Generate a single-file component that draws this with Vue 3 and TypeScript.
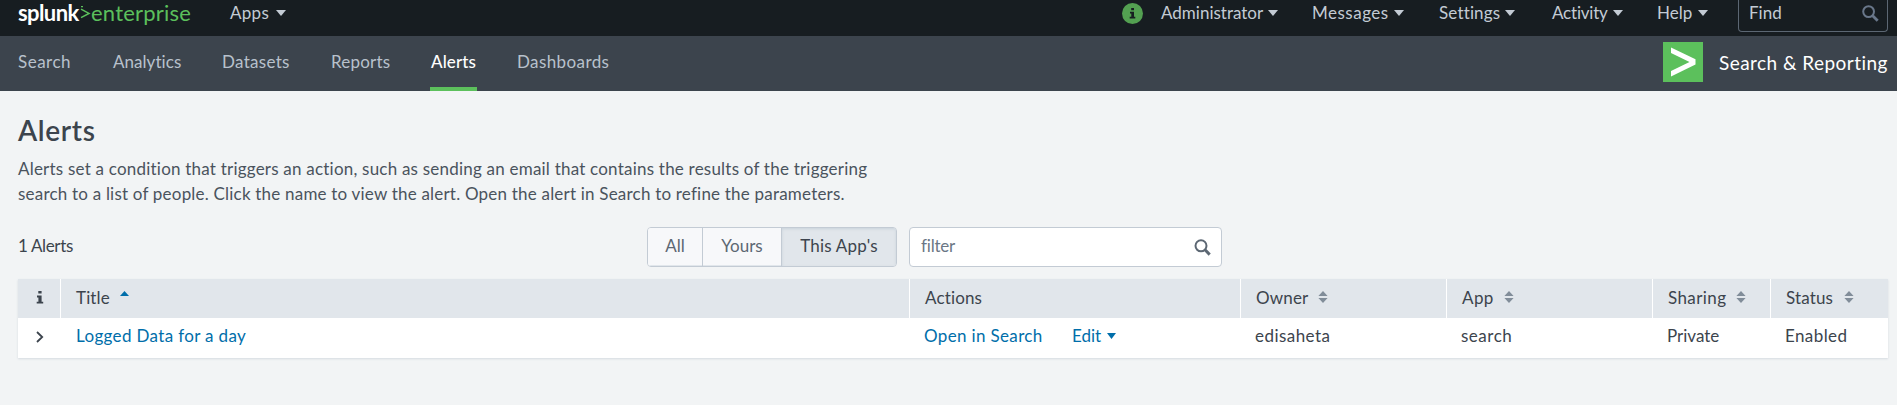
<script setup lang="ts">
interface MenuItem { label: string; cls: string }
interface Column { key: string; label: string; sortable: boolean }

const menus: MenuItem[] = [
  { label: 'Administrator', cls: 'm-admin' },
  { label: 'Messages', cls: 'm-messages' },
  { label: 'Settings', cls: 'm-settings' },
  { label: 'Activity', cls: 'm-activity' },
  { label: 'Help', cls: 'm-help' },
]
const tabs: string[] = ['Search', 'Analytics', 'Datasets', 'Reports', 'Alerts', 'Dashboards']
const activeTab = 'Alerts'
const scopes: string[] = ['All', 'Yours', "This App's"]
const activeScope = "This App's"
const columns: Column[] = [
  { key: 'owner', label: 'Owner', sortable: true },
  { key: 'app', label: 'App', sortable: true },
  { key: 'sharing', label: 'Sharing', sortable: true },
  { key: 'status', label: 'Status', sortable: true },
]
const alerts = [
  { title: 'Logged Data for a day', owner: 'edisaheta', app: 'search', sharing: 'Private', status: 'Enabled' },
] as Record<string, string>[]
</script>

<template>
  <div class="page">
    <header class="topbar">
      <div class="logo"><span class="brand">splunk</span><svg class="gt" width="11" height="13" viewBox="0 0 11 13"><path d="M1 3.2L9 7.4L1 11.6" /><path d="M1 0.6h2" /></svg><span class="edition">enterprise</span></div>
      <a class="menu m-apps"><span>Apps</span><svg class="caret" width="10" height="6" viewBox="0 0 10 6"><path d="M0 0H10L5 6Z" /></svg></a>
      <svg class="health" width="21" height="21" viewBox="0 0 21 21">
        <circle cx="10.5" cy="10.5" r="10.5" fill="#53a051" />
        <path fill="#171d21" d="M9.2 5h2.8v2.3H9.2zM8 8.7h4v5h1.3v1.8H7.7v-1.8h1.6v-3.2H8z" />
      </svg>
      <a v-for="m in menus" :key="m.label" class="menu" :class="m.cls">
        <span>{{ m.label }}</span><svg class="caret" width="10" height="6" viewBox="0 0 10 6"><path d="M0 0H10L5 6Z" /></svg>
      </a>
      <div class="find">
        <span>Find</span>
        <svg width="17" height="17" viewBox="0 0 17 17"><circle cx="6.6" cy="6.6" r="5.4" fill="none" stroke="#69778a" stroke-width="2" /><path d="M10.7 10.7L15.7 15.7" stroke="#69778a" stroke-width="2.8" /></svg>
      </div>
    </header>

    <nav class="appbar">
      <a v-for="t in tabs" :key="t" class="tab" :class="[`t-${t.toLowerCase()}`, { active: t === activeTab }]">{{ t }}</a>
      <div class="app">
        <svg width="40" height="40" viewBox="0 0 40 40"><rect width="40" height="40" fill="#5cc05c" /><path fill="#fff" d="M8 5.5L32.5 17.2V22.5L8 34.5V29L26.5 20L8 11Z" /></svg>
        <span>Search &amp; Reporting</span>
      </div>
    </nav>

    <main>
      <h1>Alerts</h1>
      <p class="intro"><span class="l1">Alerts set a condition that triggers an action, such as sending an email that contains the results of the triggering</span><br><span class="l2">search to a list of people. Click the name to view the alert. Open the alert in Search to refine the parameters.</span></p>

      <div class="toolbar">
        <div class="count">1 Alerts</div>
        <div class="scopes">
          <button v-for="s in scopes" :key="s" :class="{ on: s === activeScope }">{{ s }}</button>
        </div>
        <div class="filter">
          <span>filter</span>
          <svg width="17" height="17" viewBox="0 0 17 17"><circle cx="7" cy="6.8" r="5.5" fill="none" stroke="#5c6773" stroke-width="2" /><path d="M11 10.8L15.7 15.6" stroke="#5c6773" stroke-width="3" /></svg>
        </div>
      </div>

      <div class="table">
        <div class="row head">
          <div class="cell info"><svg width="8" height="13" viewBox="0 0 8 13"><path fill="#3c444d" d="M2.3 0H5.6V2.6H2.3zM1 4.6H5.6V10.7H7.2V12.6H.7V10.7H2.4V6.5H1z" /></svg></div>
          <div class="cell">Title<svg class="asc" width="9" height="5" viewBox="0 0 9 5"><path fill="#006eaa" d="M4.5 0L9 5H0Z" /></svg></div>
          <div class="cell">Actions</div>
          <div v-for="c in columns" :key="c.key" class="cell" :class="`h-${c.key}`">{{ c.label }}<svg v-if="c.sortable" class="sort" width="10" height="12" viewBox="0 0 10 12"><path fill="#818d99" d="M5 0L9.6 5H.4ZM5 12L.4 7H9.6Z" /></svg></div>
        </div>
        <div v-for="a in alerts" :key="a.title" class="row body">
          <div class="cell info"><svg width="8" height="12" viewBox="0 0 8 12"><path d="M1 1L6.2 6L1 11" fill="none" stroke="#3c444d" stroke-width="1.8" /></svg></div>
          <div class="cell"><a>{{ a.title }}</a></div>
          <div class="cell actions"><a class="open">Open in Search</a><a class="edit">Edit<svg width="9" height="6" viewBox="0 0 9 6"><path fill="#006eaa" d="M0 0H9L4.5 6Z" /></svg></a></div>
          <div v-for="c in columns" :key="c.key" class="cell" :class="`c-${c.key}`">{{ a[c.key] }}</div>
        </div>
      </div>
    </main>
  </div>
</template>

<style>
body { background: #f2f4f5; }
</style>

<style scoped>
* { box-sizing: border-box; }
.page { width: 1897px; height: 405px; overflow: hidden; background: #f2f4f5; color: #3c444d; font: 17px/25px Lato, "Open Sans", sans-serif; white-space: nowrap; }
svg { flex: none; display: block; }

.topbar { display: flex; height: 36px; padding-left: 18px; background: #171d21; color: #c3cbd4; }
.logo { display: flex; width: 212px; height: 28px; font-size: 22px; line-height: 26px; }
.brand { width: 62px; color: #fff; font-weight: 700; letter-spacing: -0.6px; }
.gt { margin-top: 6px; fill: none; stroke: #5cc05c; stroke-width: 1.5; }
.edition { color: #5cc05c; letter-spacing: 0.2px; }
.menu { display: flex; height: 27px; line-height: 26px; }
.menu .caret { margin: 10px 0 0 5px; fill: #c3cbd4; }
.m-apps { width: 892px; letter-spacing: 0.3px; }
.menu.m-apps .caret { margin-left: 7px; }
.health { margin: 3px 18px 0 0; }
.m-admin { width: 151px; }
.m-messages { width: 127px; letter-spacing: 0.5px; }
.m-settings { width: 113px; letter-spacing: 0.15px; }
.m-activity { width: 105px; letter-spacing: -0.2px; }
.m-help { width: 81px; }
.menu.m-help .caret { margin-left: 6px; }
.find { display: flex; justify-content: space-between; width: 150px; height: 32px; padding: 0 8px 0 10px; border: 1px solid #5c6773; border-top: 0; border-radius: 0 0 4px 4px; line-height: 26px; }
.find svg { margin-top: 5px; }

.appbar { display: flex; height: 55px; padding-left: 18px; background: #3c444d; color: #b8c1cc; letter-spacing: 0.3px; }
.tab { height: 55px; line-height: 51px; }
.t-search { width: 95px; letter-spacing: 0.5px; }
.t-analytics { width: 109px; letter-spacing: 0.05px; }
.t-datasets { width: 109px; }
.t-reports { width: 99px; letter-spacing: 0.2px; }
.t-alerts { width: 47px; margin-right: 40px; text-align: center; }
.t-dashboards { letter-spacing: 0.4px; }
.tab.active { color: #fff; font-weight: 500; letter-spacing: 0.1px; border-bottom: 4px solid #5cc05c; }
.app { display: flex; margin-left: auto; padding: 6px 9px 0 0; color: #fff; font-size: 19px; line-height: 41px; letter-spacing: 0.45px; }
.app span { width: 169px; margin-left: 16px; }

main { padding: 0 9px 0 18px; }
h1 { margin: 0; padding-top: 19px; height: 65px; font-size: 28px; line-height: 40px; font-weight: 600; letter-spacing: 0.65px; }
.intro { margin: 0; height: 71px; line-height: 25px; color: #4a535d; }
.l1 { letter-spacing: 0.215px; }
.l2 { letter-spacing: 0.205px; }
.toolbar { display: flex; height: 52px; color: #3c444d; }
.count { width: 629px; line-height: 38px; letter-spacing: -0.35px; }
.scopes { display: flex; width: 250px; height: 40px; border: 1px solid #c3cbd4; border-radius: 4px; overflow: hidden; }
button { margin: 0; padding: 0 0 2px; height: 38px; border: 0; border-right: 1px solid #c3cbd4; background: #f7f8fa; box-shadow: inset 0 -1px 0 #e1e6eb; color: #5c6773; font: inherit; line-height: 34px; }
button:nth-child(1) { width: 55px; }
button:nth-child(2) { width: 79px; }
button:nth-child(3) { width: 114px; border: 0; letter-spacing: 0.2px; }
button.on { background: #e1e6eb; color: #3c444d; box-shadow: inset 0 1px 3px #c9d2da; }
.filter { display: flex; justify-content: space-between; width: 313px; height: 40px; margin-left: 12px; padding: 0 10px 0 11px; background: #fff; border: 1px solid #c3cbd4; border-radius: 4px; color: #6b7785; line-height: 36px; letter-spacing: -0.2px; }
.filter svg { margin-top: 11px; }

.table { height: 79px; background: #fff; box-shadow: 0 1px 2px #d5dbe0; }
.row { display: grid; grid-template-columns: 43px 849px 331px 206px 206px 118px 117px; }
.head { height: 39px; line-height: 37px; letter-spacing: 0.15px; }
.head .cell { display: flex; background: #e1e6eb; border-right: 1px solid #fff; padding-left: 15px; }
.head .cell:last-child { border-right: 0; }
.row .cell.info { display: flex; justify-content: center; padding: 0 0 0 1px; }
.head .info svg { margin-top: 12px; }
.asc { margin: 12px 0 0 10px; }
.sort { margin: 12px 0 0 10px; }
.h-app { letter-spacing: 0.4px; }
.h-sharing { letter-spacing: 0.4px; }
.h-status .sort { margin-left: 11px; }
.body { height: 40px; line-height: 36px; letter-spacing: 0.35px; }
.body .cell { padding-left: 14px; }
.body .cell:nth-child(2) { padding-left: 15px; }
.body .info svg { margin-top: 13px; }
.body a { color: #006eaa; }
.actions { display: flex; }
.open { width: 148px; letter-spacing: 0.35px; }
.edit { display: flex; letter-spacing: 0; }
.edit svg { margin: 15px 0 0 6px; }
.c-owner { letter-spacing: 0.45px; }
.c-app { letter-spacing: 0.5px; }
.c-sharing { letter-spacing: 0; }
.c-status { letter-spacing: 0.4px; }
</style>
